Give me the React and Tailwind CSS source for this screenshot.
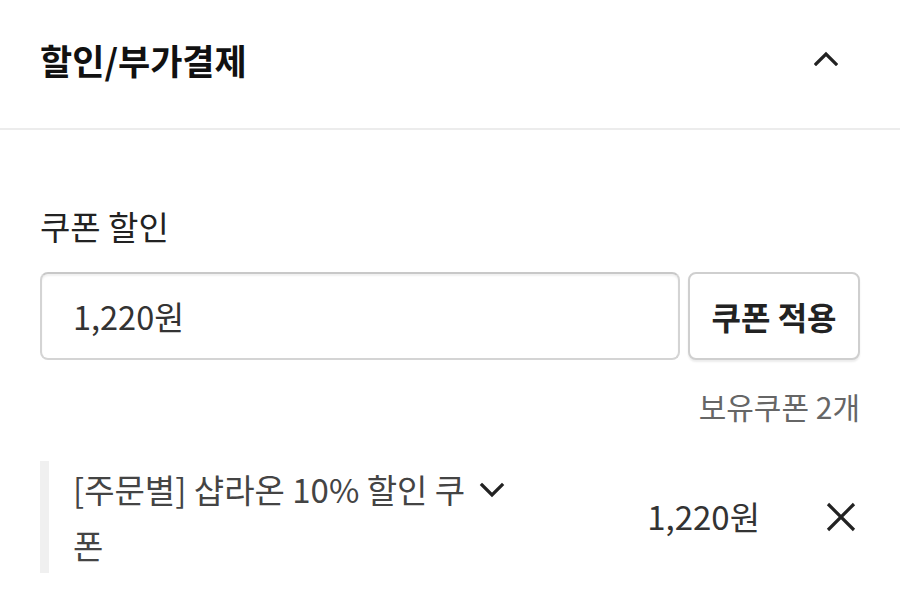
export default function App() {
  const font = { fontFamily: '"Noto Sans CJK KR", "Noto Sans", sans-serif' };
  return (
    <div className="w-[900px] h-[598px] bg-white overflow-hidden" style={font}>
      <div className="h-[130px] flex items-center justify-between pl-[40px] pr-[62px] pb-[8px] border-b-2 border-[#ececec]">
        <h2 className="text-[35px] font-bold text-[#111]">할인/부가결제</h2>
        <svg className="mb-[4px]" width="24" height="15" viewBox="0 0 24 15" fill="none">
          <path d="M2 13 L12 3 L22 13" stroke="#222" strokeWidth="3.2" strokeLinecap="square" />
        </svg>
      </div>
      <div className="px-[40px] pt-[76px]">
        <div className="text-[33px] text-[#222] leading-[40px]">쿠폰 할인</div>
        <div className="mt-[26px] flex gap-[8px]">
          <div className="flex-1 h-[88px] rounded-[8px] border-2 border-[#d4d4d4] border-t-[#c8c8c8] shadow-[inset_0_2px_2px_rgba(0,0,0,0.06)] flex items-center pl-[31px] text-[32.5px] text-[#333]">
            1,220원
          </div>
          <button className="w-[172px] h-[88px] rounded-[8px] border-2 border-[#cfcfcf] bg-white shadow-[0_2px_2px_rgba(0,0,0,0.08)] text-[32px] font-bold text-[#222]">
            쿠폰 적용
          </button>
        </div>
        <div className="mt-[28px] text-right text-[30px] text-[#666] leading-[36px]">보유쿠폰 2개</div>
        <div className="mt-[37px] flex items-center border-l-[9px] border-[#f0f0f0] h-[112px]">
          <div className="flex items-start pl-[24px] w-[470px] shrink-0">
            <div className="text-[33px] text-[#444] leading-[56px] whitespace-nowrap">
              [주문별] 샵라온 10% 할인 쿠<br />폰
            </div>
            <svg className="ml-[14px] mt-[21px] shrink-0" width="26" height="16" viewBox="0 0 26 16" fill="none">
              <path d="M3 3 L13 13 L23 3" stroke="#222" strokeWidth="3.2" strokeLinecap="square" />
            </svg>
          </div>
          <div className="flex-1 text-right pr-[66px] text-[33px] text-[#333]">1,220원</div>
          <svg width="30" height="30" viewBox="0 0 30 30" fill="none" className="mr-[4px]">
            <path d="M2 2 L28 28 M28 2 L2 28" stroke="#222" strokeWidth="3.2" />
          </svg>
        </div>
      </div>
    </div>
  );
}
